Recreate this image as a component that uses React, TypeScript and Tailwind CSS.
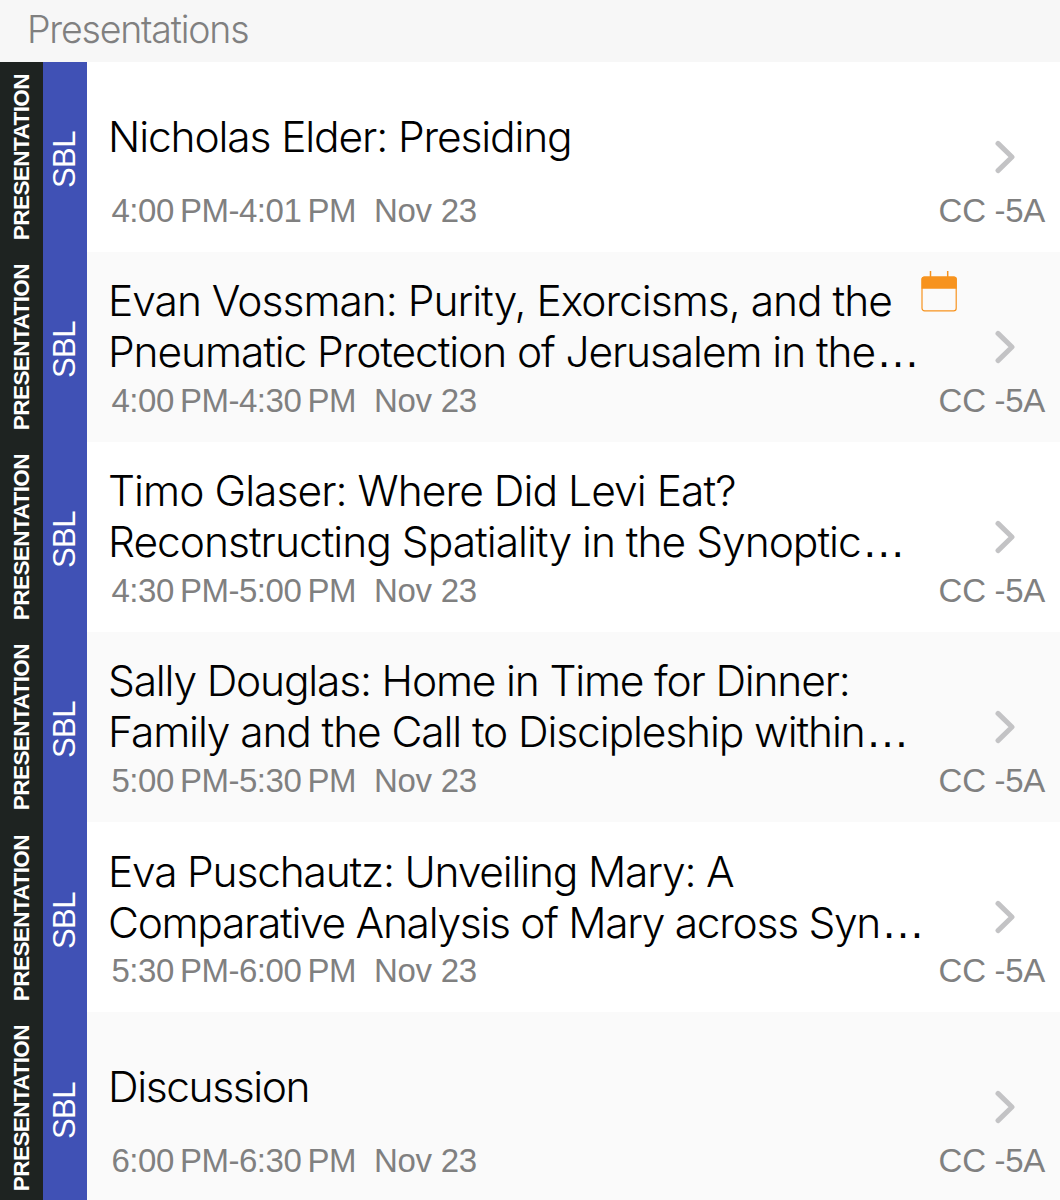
type Presentation = {
  lines: { text: string; tracking: string; clipped?: boolean }[];
  time: string;
  date: string;
  room: string;
  scheduled?: boolean;
};

const presentations: Presentation[] = [
  {
    lines: [{ text: "Nicholas Elder: Presiding", tracking: "tracking-[-1.13px]" }],
    time: "4:00\u2009PM-4:01\u2009PM",
    date: "Nov 23",
    room: "CC -5A",
  },
  {
    lines: [
      { text: "Evan Vossman: Purity, Exorcisms, and the", tracking: "tracking-[-1px]" },
      { text: "Pneumatic Protection of Jerusalem in the", tracking: "tracking-[-1.1px]", clipped: true },
    ],
    time: "4:00\u2009PM-4:30\u2009PM",
    date: "Nov 23",
    room: "CC -5A",
    scheduled: true,
  },
  {
    lines: [
      { text: "Timo Glaser: Where Did Levi Eat?", tracking: "tracking-[-0.94px]" },
      { text: "Reconstructing Spatiality in the Synoptic", tracking: "tracking-[-1px]", clipped: true },
    ],
    time: "4:30\u2009PM-5:00\u2009PM",
    date: "Nov 23",
    room: "CC -5A",
  },
  {
    lines: [
      { text: "Sally Douglas: Home in Time for Dinner:", tracking: "tracking-[-1.18px]" },
      { text: "Family and the Call to Discipleship within", tracking: "tracking-[-1.12px]", clipped: true },
    ],
    time: "5:00\u2009PM-5:30\u2009PM",
    date: "Nov 23",
    room: "CC -5A",
  },
  {
    lines: [
      { text: "Eva Puschautz: Unveiling Mary: A", tracking: "tracking-[-1.19px]" },
      { text: "Comparative Analysis of Mary across Syn", tracking: "tracking-[-1.3px]", clipped: true },
    ],
    time: "5:30\u2009PM-6:00\u2009PM",
    date: "Nov 23",
    room: "CC -5A",
  },
  {
    lines: [{ text: "Discussion", tracking: "tracking-[-1.4px]" }],
    time: "6:00\u2009PM-6:30\u2009PM",
    date: "Nov 23",
    room: "CC -5A",
  },
];

function CalendarIcon() {
  return (
    <svg width="36" height="41" viewBox="0 0 36 41" fill="none">
      <path d="M9.5 0V6M26.7 0V6" stroke="#f7931e" strokeWidth="1.5" />
      <rect x="1" y="6" width="34.2" height="33.9" rx="2.6" stroke="#f7931e" strokeWidth="1.2" />
      <path d="M0.5 17.7V8.2a2.8 2.8 0 0 1 2.8-2.8h29.7a2.8 2.8 0 0 1 2.8 2.8v9.5z" fill="#f7931e" />
    </svg>
  );
}

function ChevronIcon() {
  return (
    <svg width="20" height="34" viewBox="0 0 20 34" fill="none">
      <path
        d="M3 3.4L17 17L3 30.6"
        stroke="#c3c3c5"
        strokeWidth="5"
        strokeLinecap="round"
        strokeLinejoin="round"
      />
    </svg>
  );
}

function PresentationRow({ item }: { item: Presentation }) {
  return (
    <li className="flex h-[190.17px] shrink-0 odd:bg-white even:bg-[#fafafa]">
      <div className="flex w-[43px] shrink-0 items-center justify-center bg-[#1e2321] pt-px">
        <span className="rotate-180 text-[22.6px] leading-[26px] font-bold tracking-[-0.62px] whitespace-nowrap text-white [writing-mode:vertical-rl]">
          PRESENTATION
        </span>
      </div>
      <div className="flex w-11 shrink-0 items-center justify-center bg-[#4051b5] pt-1.5">
        <span className="rotate-180 text-[31px] leading-[34px] tracking-[-0.5px] text-white [writing-mode:vertical-rl]">
          SBL
        </span>
      </div>

      <div className="flex min-w-0 flex-1 flex-col pr-[15px] pl-[21px]">
        <div className="flex h-[126px]">
          <h2 className="flex w-[813px] flex-col justify-center pt-[23px] font-[Inter,sans-serif] text-[42.5px] leading-[51px] font-light whitespace-nowrap text-black">
            {item.lines.map((line) => (
              <span key={line.text} className={line.tracking}>
                {line.text}
                {line.clipped ? (
                  <span className="ml-px font-['Liberation_Sans',Arial,sans-serif] text-[44px] leading-none tracking-normal">
                    …
                  </span>
                ) : null}
              </span>
            ))}
          </h2>
          <div className="w-[36px] shrink-0 pt-[19px]">{item.scheduled ? <CalendarIcon /> : null}</div>
          <div className="ml-[38px] shrink-0 pt-[78px]">
            <ChevronIcon />
          </div>
        </div>
        <div className="mt-1 flex justify-between pl-[3.5px] text-[33px] leading-[38px] whitespace-pre text-[#808080]">
          <div className="flex">
            <span className="w-[262.5px] tracking-[-0.48px]">{item.time}</span>
            <span className="tracking-[-0.3px]">{item.date}</span>
          </div>
          <span className="tracking-[-0.3px]">{item.room}</span>
        </div>
      </div>
    </li>
  );
}

export default function App() {
  return (
    <main className="flex h-[1200px] w-[1060px] flex-col overflow-hidden bg-white font-['Liberation_Sans',Arial,sans-serif]">
      <header className="flex h-[61.5px] shrink-0 items-center bg-[#f7f7f7] pb-px pl-[27px]">
        <h1 className="font-[Inter,sans-serif] text-[37.5px] leading-[46px] font-light tracking-[-1.2px] text-[#808080]">
          Presentations
        </h1>
      </header>
      <ul className="flex flex-col">
        {presentations.map((item) => (
          <PresentationRow key={item.time} item={item} />
        ))}
      </ul>
    </main>
  );
}
